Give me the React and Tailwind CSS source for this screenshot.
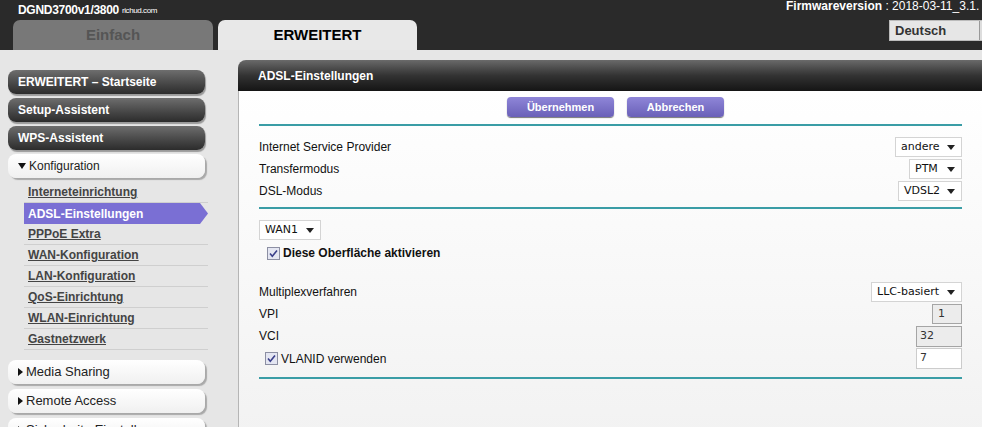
import React from "react";

const subItems = [
  "Interneteinrichtung",
  "ADSL-Einstellungen",
  "PPPoE Extra",
  "WAN-Konfiguration",
  "LAN-Konfiguration",
  "QoS-Einrichtung",
  "WLAN-Einrichtung",
  "Gastnetzwerk",
];

function Caret() {
  return (
    <svg width="8" height="5" viewBox="0 0 8 5" className="shrink-0">
      <path d="M0 0 L8 0 L4 5 Z" fill="#222" />
    </svg>
  );
}

function FakeSelect({ value, w }) {
  return (
    <div
      className={`${w} h-[20px] bg-white border border-[#d4d4d4] flex items-center justify-between pl-[5px] pr-[6px] text-[11px] text-[#111] font-['DejaVu_Sans',Verdana,sans-serif]`}
    >
      <span>{value}</span>
      <Caret />
    </div>
  );
}

function Check() {
  return (
    <svg width="13" height="13" viewBox="0 0 13 13" className="shrink-0">
      <rect x="0.5" y="0.5" width="12" height="12" fill="#e4e6f2" stroke="#8c8fa3" />
      <path d="M3 6.5 L5.3 9.2 L10 3.5" fill="none" stroke="#3a3f8a" strokeWidth="1.6" />
    </svg>
  );
}

function DarkBtn({ children }) {
  return (
    <div className="w-[197px] h-[24px] rounded-[8px] bg-gradient-to-b from-[#6e6e6e] to-[#2c2c2c] shadow-[1px_2px_1px_#9a9a9a] flex items-center pl-[10px] text-white text-[12px] font-bold">
      {children}
    </div>
  );
}

function LightBtn({ children }) {
  return (
    <div className="w-[197px] h-[24px] rounded-[8px] bg-gradient-to-b from-white to-[#f0f0f0] shadow-[2px_2px_1px_#a9a9a9] flex items-center pl-[10px] gap-[3px] text-[#222] text-[12px]">
      {children}
    </div>
  );
}

function Row({ label, children, h = "h-[22px]" }) {
  return (
    <div className={`${h} flex items-center justify-between`}>
      <span className="text-[12px] text-[#111]">{label}</span>
      {children}
    </div>
  );
}

export default function App() {
  return (
    <div className="w-[982px] h-[427px] overflow-hidden bg-[#e6e6e6] font-['Liberation_Sans',Arial,sans-serif]">
      {/* HEADER */}
      <div className="h-[50px] bg-[#2a2a2a] flex overflow-hidden">
        <div className="w-[786px] shrink-0">
          <div className="h-[20px] pl-[18px] flex items-center gap-[3px]">
            <span className="text-white font-bold text-[12px] tracking-[-0.3px]">DGND3700v1/3800</span>
            <span className="text-white text-[8px] tracking-[-0.4px] mt-[2px]">richud.com</span>
          </div>
          <div className="flex pl-[13px] gap-[5px]">
            <div className="w-[200px] h-[30px] rounded-t-[7px] bg-[#787878] flex items-center justify-center text-[15px] font-bold text-[#555]">
              Einfach
            </div>
            <div className="w-[199px] h-[30px] rounded-t-[7px] bg-[#e8e8e8] flex items-center justify-center text-[15px] font-bold text-black">
              ERWEITERT
            </div>
          </div>
        </div>
        <div className="shrink-0 whitespace-nowrap">
          <div className="h-[12px] flex items-center text-white text-[12px]">
            <span className="font-bold">Firmwareversion</span>
            <span>&nbsp;: 2018-03-11_3.1.</span>
          </div>
          <div className="ml-[103px] mt-[8px] w-[120px] h-[21px] bg-[#e6e6e6] border border-[#bbb] flex items-center pl-[5px] text-[13px] font-bold text-[#333]">
            Deutsch
            <div className="ml-[33px] w-[12px] h-[19px] border-l border-[#999] bg-[#ddd]" />
          </div>
        </div>
      </div>

      {/* BODY */}
      <div className="flex">
        {/* SIDEBAR */}
        <div className="w-[238px] shrink-0 pt-[20px] pl-[8px] flex flex-col">
          <div className="flex flex-col gap-[4px]">
            <DarkBtn>ERWEITERT – Startseite</DarkBtn>
            <DarkBtn>Setup-Assistent</DarkBtn>
            <DarkBtn>WPS-Assistent</DarkBtn>
            <LightBtn>
              <svg width="8" height="6" viewBox="0 0 8 6">
                <path d="M0 0 L8 0 L4 6 Z" fill="#111" />
              </svg>
              Konfiguration
            </LightBtn>
          </div>
          <div className="mt-[4px] ml-[16px] w-[184px] flex flex-col">
            {subItems.map((s) =>
              s === "ADSL-Einstellungen" ? (
                <div
                  key={s}
                  className="h-[21px] bg-[#7a6fd4] [clip-path:polygon(0_0,calc(100%-8px)_0,100%_50%,calc(100%-8px)_100%,0_100%)] flex items-center pl-[4px] text-white text-[12px] font-bold"
                >
                  {s}
                </div>
              ) : (
                <div
                  key={s}
                  className="h-[21px] border-b border-[#cfcfcf] flex items-center pl-[4px] text-[12px] font-bold text-[#444] underline"
                >
                  {s}
                </div>
              )
            )}
          </div>
          <div className="mt-[10px] flex flex-col gap-[5px]">
            <LightBtn>
              <svg width="5" height="8" viewBox="0 0 5 8">
                <path d="M0 0 L5 4 L0 8 Z" fill="#111" />
              </svg>
              <span className="text-[13px]">Media Sharing</span>
            </LightBtn>
            <LightBtn>
              <svg width="5" height="8" viewBox="0 0 5 8">
                <path d="M0 0 L5 4 L0 8 Z" fill="#111" />
              </svg>
              <span className="text-[13px]">Remote Access</span>
            </LightBtn>
            <LightBtn>
              <svg width="5" height="8" viewBox="0 0 5 8">
                <path d="M0 0 L5 4 L0 8 Z" fill="#111" />
              </svg>
              <span className="text-[13px]">Sicherheits-Einstellungen</span>
            </LightBtn>
          </div>
        </div>

        {/* MAIN */}
        <div className="flex-1 pt-[10px]">
          <div className="h-[31px] rounded-tl-[8px] bg-gradient-to-b from-[#6a6a6a] via-[#333] to-[#151515] flex items-center pl-[20px] text-white text-[12px] font-bold">
            ADSL-Einstellungen
          </div>
          <div className="h-[400px] border-l border-[#b5b5b5] bg-gradient-to-b from-white to-[#f0f0f0] pl-[20px] pt-[6px]">
            <div className="w-[703px]">
              <div className="flex gap-[13px] pl-[248px]">
                <div className="w-[107px] h-[20px] rounded-[4px] bg-gradient-to-b from-[#8f86d8] to-[#6a60b8] shadow-[0_1px_1px_#777] flex items-center justify-center text-white text-[11px] font-bold">
                  Übernehmen
                </div>
                <div className="w-[97px] h-[20px] rounded-[4px] bg-gradient-to-b from-[#8f86d8] to-[#6a60b8] shadow-[0_1px_1px_#777] flex items-center justify-center text-white text-[11px] font-bold">
                  Abbrechen
                </div>
              </div>
              <div className="mt-[7px] h-[2px] bg-[#3a9da6]" />

              <div className="mt-[10px] flex flex-col">
                <Row label="Internet Service Provider">
                  <FakeSelect value="andere" w="w-[67px]" />
                </Row>
                <Row label="Transfermodus">
                  <FakeSelect value="PTM" w="w-[53px]" />
                </Row>
                <Row label="DSL-Modus">
                  <FakeSelect value="VDSL2" w="w-[64px]" />
                </Row>
              </div>
              <div className="mt-[5px] h-[2px] bg-[#3a9da6]" />

              <div className="mt-[11px]">
                <FakeSelect value="WAN1" w="w-[62px]" />
              </div>
              <div className="mt-[3px] h-[20px] pl-[8px] flex items-center gap-[3px] text-[12px] font-bold text-[#111]">
                <Check />
                Diese Oberfläche aktivieren
              </div>

              <div className="mt-[18px] flex flex-col">
                <Row label="Multiplexverfahren" h="h-[22px]">
                  <FakeSelect value="LLC-basiert" w="w-[91px]" />
                </Row>
                <Row label="VPI" h="h-[22px]">
                  <div className="w-[30px] h-[20px] bg-[#ececec] border border-[#a5a5a5] flex items-center pl-[5px] text-[11px] text-[#333] font-['DejaVu_Sans',Verdana,sans-serif]">
                    1
                  </div>
                </Row>
                <Row label="VCI" h="h-[22px]">
                  <div className="w-[46px] h-[21px] bg-[#ececec] border border-[#a5a5a5] flex items-center pl-[3px] text-[11px] text-[#333] font-['DejaVu_Sans',Verdana,sans-serif]">
                    32
                  </div>
                </Row>
                <div className="h-[23px] flex items-center justify-between">
                  <span className="pl-[6px] flex items-center gap-[3px] text-[12px] text-[#111]">
                    <Check />
                    VLANID verwenden
                  </span>
                  <div className="w-[46px] h-[21px] bg-white border border-[#ccc] flex items-center pl-[3px] text-[11px] text-[#333] font-['DejaVu_Sans',Verdana,sans-serif]">
                    7
                  </div>
                </div>
              </div>
              <div className="mt-[7px] h-[2px] bg-[#3a9da6]" />
            </div>
          </div>
        </div>
      </div>
    </div>
  );
}
